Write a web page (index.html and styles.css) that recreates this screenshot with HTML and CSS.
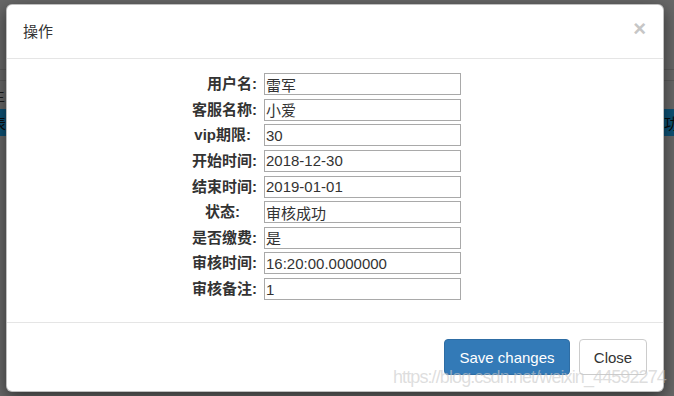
FILE: index.html
```html
<!DOCTYPE html>
<html lang="zh-CN">
<head>
<meta charset="utf-8">
<title>操作</title>
<link rel="stylesheet" href="styles.css">
</head>
<body>
<div class="page">
  <div class="rule"></div>
  <div class="spacer"></div>
  <div class="rule"></div>
  <div class="strip"><span class="frag-left">主</span></div>
  <div class="band"><span class="frag-left">表</span><span class="frag-right">审核成功</span></div>
</div>

<div class="modal">
  <div class="modal-header">
    <div class="modal-title">操作</div>
    <div class="close">×</div>
  </div>
  <div class="modal-body">
    <div class="form">
      <div class="lbl">用户名:</div><input class="field" type="text" value="雷军">
      <div class="lbl">客服名称:</div><input class="field" type="text" value="小爱">
      <div class="lbl lbl-vip">vip期限:</div><input class="field" type="text" value="30">
      <div class="lbl">开始时间:</div><input class="field" type="text" value="2018-12-30">
      <div class="lbl">结束时间:</div><input class="field" type="text" value="2019-01-01">
      <div class="lbl lbl-state">状态:</div><input class="field" type="text" value="审核成功">
      <div class="lbl">是否缴费:</div><input class="field" type="text" value="是">
      <div class="lbl">审核时间:</div><input class="field" type="text" value="16:20:00.0000000">
      <div class="lbl">审核备注:</div><input class="field" type="text" value="1">
    </div>
  </div>
  <div class="modal-footer">
    <button class="btn btn-primary" type="button">Save changes</button>
    <button class="btn btn-default" type="button">Close</button>
  </div>
</div>

<div class="watermark">https://blog.csdn.net/weixin_44592274</div>
</body>
</html>
```

FILE: styles.css
```css
* {
  box-sizing: border-box;
}

html,
body {
  margin: 0;
  height: 100%;
}

body {
  background: #676767;
  font-family: "Liberation Sans", "Noto Sans CJK SC", sans-serif;
  font-size: 15px;
  color: #333;
  overflow: hidden;
  position: relative;
}

/* page behind the backdrop */
.page {
  padding-top: 69px;
}

.rule {
  height: 1px;
  background: #5a5a5a;
}

.spacer {
  height: 10px;
}

.strip {
  height: 28px;
  display: flex;
  align-items: center;
  color: #1a1a1a;
  font-size: 14px;
}

.band {
  height: 27px;
  background: #0d5174;
  display: flex;
  align-items: center;
  justify-content: space-between;
  color: #0a0a0a;
  font-size: 15px;
}

.frag-left {
  margin-left: -9px;
}

.frag-right {
  margin-right: -5px;
}

/* modal dialog */
.modal {
  position: absolute;
  left: 6px;
  top: 4px;
  width: 658px;
  height: 388px;
  background: #fff;
  border: 1px solid rgba(0, 0, 0, 0.25);
  border-radius: 6px;
  box-shadow: 0 5px 15px rgba(0, 0, 0, 0.5);
  display: flex;
  flex-direction: column;
}

.modal-header {
  height: 54px;
  flex: none;
  padding: 0 17px 0 16px;
  border-bottom: 1px solid #e5e5e5;
  display: flex;
  align-items: center;
  justify-content: space-between;
}

.modal-title {
  font-size: 15px;
  line-height: 21px;
  color: #333;
}

.close {
  font-size: 22px;
  font-weight: bold;
  line-height: 1;
  color: #c6c6c6;
  margin-top: -6px;
}

.modal-body {
  height: 264px;
  flex: none;
  padding: 14px 0 0 178px;
  border-bottom: 1px solid #e5e5e5;
}

.form {
  display: grid;
  grid-template-columns: 72px 197px;
  grid-auto-rows: 22px;
  column-gap: 7px;
  row-gap: 3.625px;
}

.lbl {
  text-align: right;
  font-weight: bold;
  font-size: 15px;
  line-height: 22px;
  white-space: nowrap;
  color: #333;
}

.lbl-vip {
  padding-right: 6px;
}

.lbl-state {
  padding-right: 17px;
}

.field {
  width: 197px;
  height: 22px;
  margin: 0;
  padding: 0 2px 0 1px;
  border: 1px solid #a9a9a9;
  border-radius: 0;
  font-family: "Liberation Sans", "Noto Sans CJK SC", sans-serif;
  font-size: 15px;
  color: #333;
  background: #fff;
  outline: none;
}

.modal-footer {
  flex: 1;
  padding: 0 16px;
  display: flex;
  justify-content: flex-end;
  align-items: center;
  gap: 9px;
}

.btn {
  height: 36px;
  margin: 0;
  padding: 0;
  border-radius: 4px;
  font-family: "Liberation Sans", sans-serif;
  font-size: 15px;
  text-align: center;
  cursor: pointer;
}

.btn-primary {
  width: 126px;
  background: #337ab7;
  border: 1px solid #2e6da4;
  color: #fff;
}

.btn-default {
  width: 68px;
  background: #fff;
  border: 1px solid #ccc;
  color: #333;
}

/* site watermark lying over the dialog */
.watermark {
  position: absolute;
  left: 393px;
  top: 367px;
  font-family: "Liberation Sans", sans-serif;
  font-size: 18px;
  line-height: 20px;
  letter-spacing: -0.9px;
  color: rgba(200, 200, 200, 0.6);
  white-space: nowrap;
  pointer-events: none;
}
```
